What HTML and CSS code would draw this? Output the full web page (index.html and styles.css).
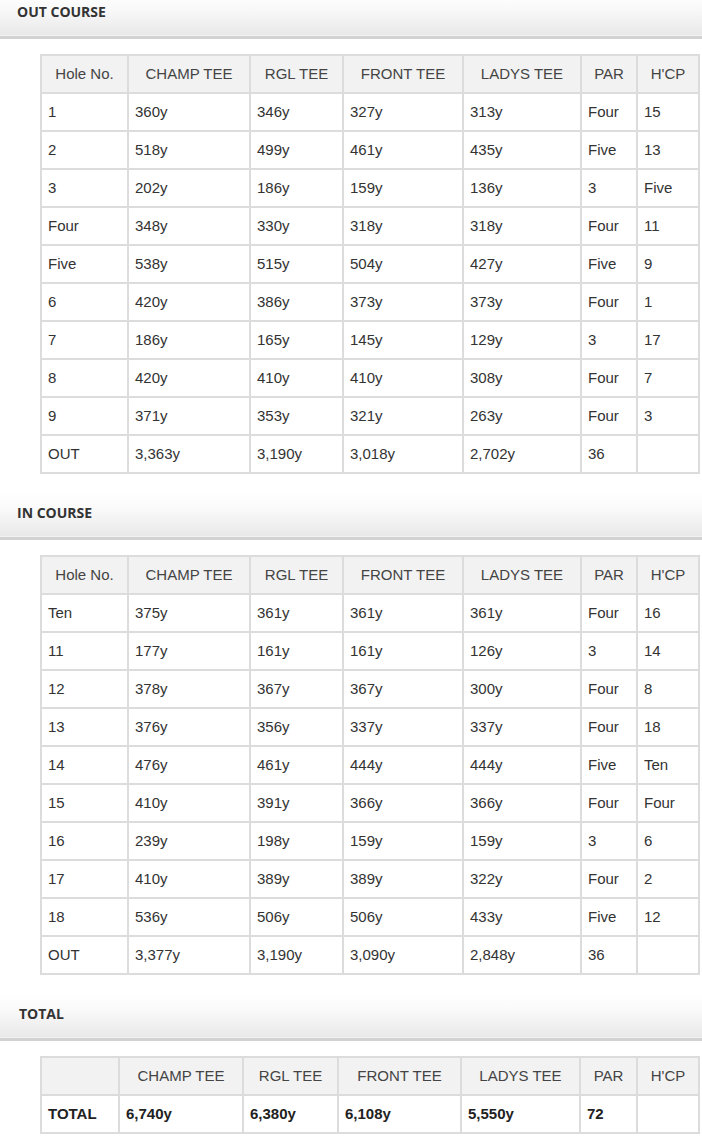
FILE: index.html
```html
<!DOCTYPE html>
<html>
<head>
<meta charset="utf-8">
<link rel="stylesheet" href="styles.css">
</head>
<body>
<div class="page">
  <h2 class="bar first">OUT COURSE</h2>
  <table class="score">
    <colgroup><col class="w1"><col class="w2"><col class="w3"><col class="w4"><col class="w5"><col class="w6"><col class="w7"></colgroup>
    <thead><tr><th>Hole No.</th><th>CHAMP TEE</th><th>RGL TEE</th><th>FRONT TEE</th><th>LADYS TEE</th><th>PAR</th><th>H'CP</th></tr></thead>
    <tbody>
      <tr><td>1</td><td>360y</td><td>346y</td><td>327y</td><td>313y</td><td>Four</td><td>15</td></tr>
      <tr><td>2</td><td>518y</td><td>499y</td><td>461y</td><td>435y</td><td>Five</td><td>13</td></tr>
      <tr><td>3</td><td>202y</td><td>186y</td><td>159y</td><td>136y</td><td>3</td><td>Five</td></tr>
      <tr><td>Four</td><td>348y</td><td>330y</td><td>318y</td><td>318y</td><td>Four</td><td>11</td></tr>
      <tr><td>Five</td><td>538y</td><td>515y</td><td>504y</td><td>427y</td><td>Five</td><td>9</td></tr>
      <tr><td>6</td><td>420y</td><td>386y</td><td>373y</td><td>373y</td><td>Four</td><td>1</td></tr>
      <tr><td>7</td><td>186y</td><td>165y</td><td>145y</td><td>129y</td><td>3</td><td>17</td></tr>
      <tr><td>8</td><td>420y</td><td>410y</td><td>410y</td><td>308y</td><td>Four</td><td>7</td></tr>
      <tr><td>9</td><td>371y</td><td>353y</td><td>321y</td><td>263y</td><td>Four</td><td>3</td></tr>
      <tr><td>OUT</td><td>3,363y</td><td>3,190y</td><td>3,018y</td><td>2,702y</td><td>36</td><td></td></tr>
    </tbody>
  </table>

  <h2 class="bar">IN COURSE</h2>
  <table class="score">
    <colgroup><col class="w1"><col class="w2"><col class="w3"><col class="w4"><col class="w5"><col class="w6"><col class="w7"></colgroup>
    <thead><tr><th>Hole No.</th><th>CHAMP TEE</th><th>RGL TEE</th><th>FRONT TEE</th><th>LADYS TEE</th><th>PAR</th><th>H'CP</th></tr></thead>
    <tbody>
      <tr><td>Ten</td><td>375y</td><td>361y</td><td>361y</td><td>361y</td><td>Four</td><td>16</td></tr>
      <tr><td>11</td><td>177y</td><td>161y</td><td>161y</td><td>126y</td><td>3</td><td>14</td></tr>
      <tr><td>12</td><td>378y</td><td>367y</td><td>367y</td><td>300y</td><td>Four</td><td>8</td></tr>
      <tr><td>13</td><td>376y</td><td>356y</td><td>337y</td><td>337y</td><td>Four</td><td>18</td></tr>
      <tr><td>14</td><td>476y</td><td>461y</td><td>444y</td><td>444y</td><td>Five</td><td>Ten</td></tr>
      <tr><td>15</td><td>410y</td><td>391y</td><td>366y</td><td>366y</td><td>Four</td><td>Four</td></tr>
      <tr><td>16</td><td>239y</td><td>198y</td><td>159y</td><td>159y</td><td>3</td><td>6</td></tr>
      <tr><td>17</td><td>410y</td><td>389y</td><td>389y</td><td>322y</td><td>Four</td><td>2</td></tr>
      <tr><td>18</td><td>536y</td><td>506y</td><td>506y</td><td>433y</td><td>Five</td><td>12</td></tr>
      <tr><td>OUT</td><td>3,377y</td><td>3,190y</td><td>3,090y</td><td>2,848y</td><td>36</td><td></td></tr>
    </tbody>
  </table>

  <h2 class="bar last">TOTAL</h2>
  <table class="score total">
    <colgroup><col class="t1"><col class="t2"><col class="t3"><col class="t4"><col class="t5"><col class="t6"><col class="t7"></colgroup>
    <thead><tr><th></th><th>CHAMP TEE</th><th>RGL TEE</th><th>FRONT TEE</th><th>LADYS TEE</th><th>PAR</th><th>H'CP</th></tr></thead>
    <tbody>
      <tr><td>TOTAL</td><td>6,740y</td><td>6,380y</td><td>6,108y</td><td>5,550y</td><td>72</td><td></td></tr>
    </tbody>
  </table>
</div>
</body>
</html>
```

FILE: styles.css
```css
html, body {
  margin: 0;
  padding: 0;
  background: #fff;
}

.page {
  width: 702px;
  overflow: hidden;
}

.bar {
  margin: 18px 0 0 0;
  height: 41px;
  box-sizing: content-box;
  padding: 0 0 4px 17px;
  display: flex;
  align-items: center;
  font-family: "Open Sans", "DejaVu Sans", sans-serif;
  font-weight: 700;
  font-size: 14px;
  color: #333;
  background: linear-gradient(to bottom, #ffffff 0%, #fafafa 35%, #e8e8e8 100%);
  border-bottom: 3px solid #d2d2d2;
  box-shadow: inset 0 -1px 0 #f2f2f2;
}

.bar.first {
  margin-top: -9px;
}

.bar.last {
  margin-top: 18px;
  padding-left: 19px;
}

.score {
  margin: 15px 0 0 40px;
  width: 658px;
  table-layout: fixed;
  border-collapse: collapse;
  font-family: "Liberation Sans", Arial, sans-serif;
  font-size: 15px;
  color: #333;
}

.score th,
.score td {
  border: 2px solid #dcdcdc;
  height: 38px;
  padding: 0 6px;
  box-sizing: border-box;
  line-height: 18px;
  white-space: nowrap;
}

.score th {
  background: #f2f2f2;
  font-weight: 400;
  text-align: center;
  color: #444;
}

.score td {
  text-align: left;
  background: #fff;
}

.total td {
  font-weight: 700;
  color: #222;
}

.w1 { width: 87px; }
.w2 { width: 122px; }
.w3 { width: 93px; }
.w4 { width: 120px; }
.w5 { width: 118px; }
.w6 { width: 56px; }
.w7 { width: 62px; }

.t1 { width: 78px; }
.t2 { width: 124px; }
.t3 { width: 95px; }
.t4 { width: 123px; }
.t5 { width: 119px; }
.t6 { width: 57px; }
.t7 { width: 62px; }
```
